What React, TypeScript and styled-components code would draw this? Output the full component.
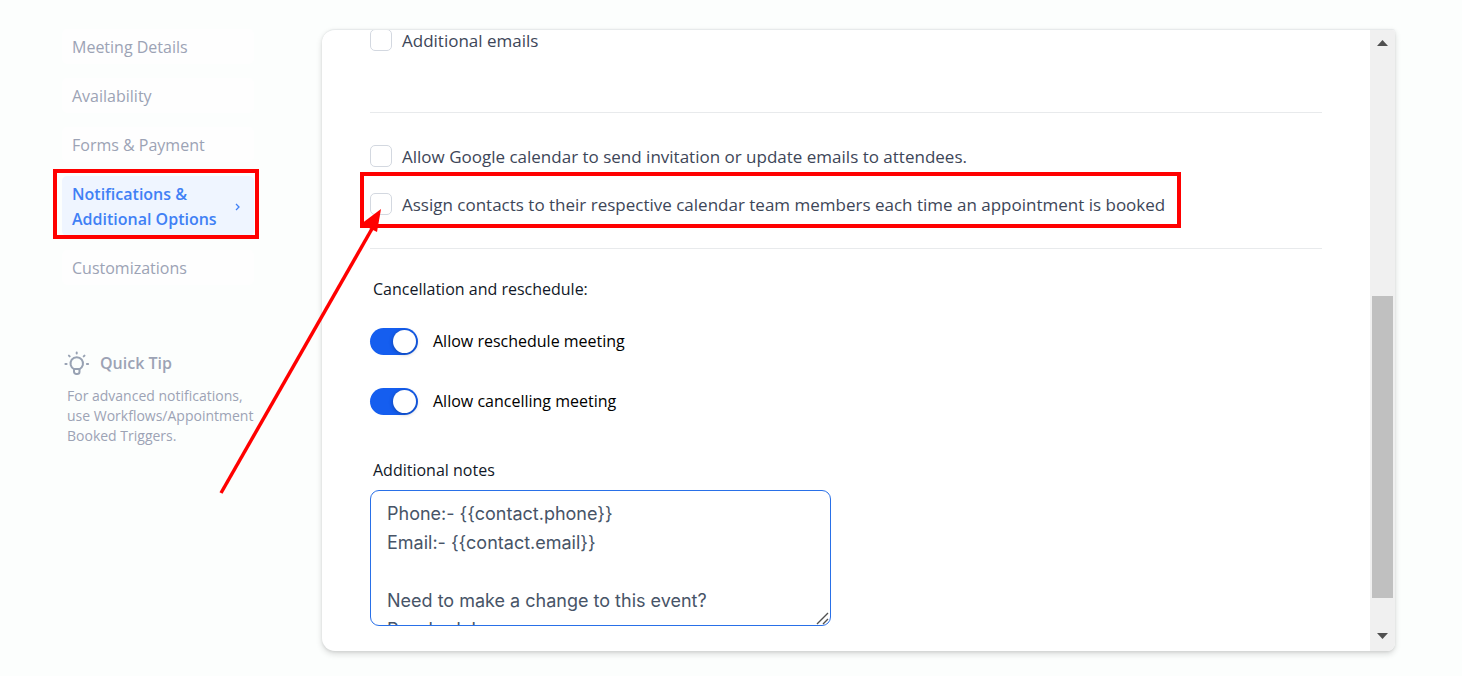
import React from "react";
import styled, { createGlobalStyle } from "styled-components";

const GlobalStyle = createGlobalStyle`
  *, *::before, *::after { box-sizing: border-box; }
  body {
    margin: 0;
    background: #fcfefd;
    font-family: "Open Sans", "Noto Sans", sans-serif;
    color: #111827;
  }
`;

const Page = styled.main`
  position: relative;
  display: flex;
  align-items: flex-start;
  gap: 68px;
  padding: 29px 67px 25px 62px;
`;

const Sidebar = styled.aside`
  flex: 0 0 192px;
`;

const NavList = styled.nav`
  display: flex;
  flex-direction: column;
  gap: 14px;
`;

const NavLink = styled.a<{ $active?: boolean }>`
  position: relative;
  display: flex;
  align-items: center;
  justify-content: space-between;
  padding: 6px 14px 4px 10px;
  border-radius: 5px;
  font-size: 16px;
  line-height: 25px;
  white-space: nowrap;
  text-decoration: none;
  font-weight: ${(p) => (p.$active ? 600 : 400)};
  color: ${(p) => (p.$active ? "#4080f5" : "#9ca3b5")};
  background: ${(p) => (p.$active ? "#eff5ff" : "#fefefe")};
`;

const Highlight = styled.span<{ $inset: string }>`
  position: absolute;
  inset: ${(p) => p.$inset};
  border: 4px solid #ff0000;
  pointer-events: none;
`;

const Tip = styled.section`
  margin-top: 65px;
  color: #9ca3b5;
`;

const TipTitle = styled.h2`
  display: flex;
  align-items: center;
  gap: 10px;
  margin: 0;
  padding-left: 2px;
  font-size: 16px;
  line-height: 26px;
  font-weight: 600;
`;

const TipText = styled.p`
  margin: 10px 0 0;
  padding-left: 5px;
  font-size: 14px;
  line-height: 20px;
  white-space: nowrap;
`;

const Panel = styled.section`
  display: flex;
  flex: 1;
  min-width: 0;
  overflow: hidden;
  border-top: 1px solid #e7eaeb;
  border-radius: 13px 3px 8px 13px;
  background: #ffffff;
  box-shadow: 0 3px 6px rgba(0, 0, 0, 0.14), 0 1px 3px rgba(0, 0, 0, 0.08);
`;

const Content = styled.form`
  flex: 1;
  min-width: 0;
  margin-top: -2px;
  padding: 0 48px 25px;
`;

const Group = styled.div<{ $space: string }>`
  display: flex;
  flex-direction: column;
  gap: 24px;
  padding: ${(p) => p.$space};
  border-bottom: 1px solid #e8eaec;
`;

const CheckLabel = styled.label`
  position: relative;
  display: flex;
  align-items: center;
  align-self: flex-start;
  gap: 10px;
  font-size: 17px;
  line-height: 22px;
  color: #3d4658;
`;

const CheckText = styled.span`
  padding-top: 2px;
`;

const Checkbox = styled.input`
  appearance: none;
  flex: none;
  width: 22px;
  height: 22px;
  margin: 0;
  border: 1px solid #d3d8e0;
  border-radius: 5px;
  background: #ffffff;
`;

const GroupTitle = styled.h2`
  margin: 28px 0 26px;
  padding-left: 3px;
  font-size: 16px;
  line-height: 25px;
  font-weight: 400;
`;

const SwitchList = styled.div`
  display: flex;
  flex-direction: column;
  gap: 33px;
`;

const SwitchLabel = styled.label`
  display: flex;
  align-items: center;
  align-self: flex-start;
  gap: 15px;
  font-size: 16px;
  line-height: 27px;
  color: #000000;
`;

const Switch = styled.input`
  appearance: none;
  display: flex;
  align-items: center;
  width: 48px;
  height: 27px;
  margin: 0;
  padding: 2px;
  border-radius: 14px;
  background: #155eef;

  &::before {
    content: "";
    width: 23px;
    height: 23px;
    border-radius: 50%;
    background: #ffffff;
    box-shadow: 0 1px 4px rgba(0, 0, 0, 0.3);
  }

  &:checked {
    justify-content: flex-end;
  }
`;

const NotesLabel = styled.label`
  display: block;
  margin-top: 42px;
  padding-left: 3px;
  font-size: 16px;
  line-height: 26px;
`;

const NotesField = styled.div`
  position: relative;
  width: 461px;
  max-width: 100%;
  margin-top: 7px;
`;

const Notes = styled.textarea`
  display: block;
  width: 100%;
  height: 136px;
  padding: 8px 16px;
  overflow: hidden;
  resize: none;
  border: 1px solid #2970e8;
  border-radius: 9px;
  outline: none;
  background: #ffffff;
  font-family: Inter, sans-serif;
  font-size: 18px;
  line-height: 29px;
  color: #475467;
`;

const Grip = styled.svg`
  position: absolute;
  right: 1px;
  bottom: 1px;
`;

const ScrollTrack = styled.div`
  display: flex;
  flex-direction: column;
  flex: 0 0 25px;
  padding: 0 2px 2px;
  background: #f0f0f0;
`;

const ScrollButton = styled.button`
  display: flex;
  align-items: center;
  justify-content: center;
  height: 26px;
  padding: 0;
  border: 0;
  background: transparent;
`;

const ThumbSpace = styled.div`
  display: flex;
  flex: 1;
  flex-direction: column;
`;

const ThumbGap = styled.div<{ $grow: number }>`
  flex: ${(p) => p.$grow} 0 0;
`;

const Thumb = styled.div`
  flex: 302 0 0;
  background: #c0c0c0;
`;

const Arrow = styled.svg`
  position: absolute;
  left: 218px;
  top: 206px;
  pointer-events: none;
`;

const Chevron = () => (
  <svg width="5" height="8" viewBox="0 0 5 8" aria-hidden="true">
    <path d="M1 1l3 3-3 3" fill="none" stroke="#4080f5" strokeWidth="1.3" />
  </svg>
);

const Bulb = () => (
  <svg width="26" height="26" viewBox="0 0 26 26" fill="none" stroke="#98a2b3" strokeWidth="2" strokeLinecap="round" strokeLinejoin="round" aria-hidden="true">
    <path d="M10.300 19.300a6.300 6.300 0 1 1 4.900 0" />
    <path d="M10 19h5.500v2.700a2.300 2.300 0 0 1-2.300 2.300h-.9a2.300 2.300 0 0 1-2.300-2.300z" />
    <path d="M12.700 2.400v1M4.900 5.600l.8.800M20.500 5.600l-.8.800M1.400 14h1.200M22.900 14h1.200" />
  </svg>
);

const notes = `Phone:- {{contact.phone}}
Email:- {{contact.email}}

Need to make a change to this event?
Reschedule:-`;

export default function App() {
  return (
    <>
      <GlobalStyle />
      <Page>
        <Sidebar>
          <NavList aria-label="Calendar settings">
            <NavLink href="#details">Meeting Details</NavLink>
            <NavLink href="#availability">Availability</NavLink>
            <NavLink href="#forms">Forms &amp; Payment</NavLink>
            <NavLink href="#notifications" $active aria-current="page">
              <span>
                Notifications &amp;
                <br />
                Additional Options
              </span>
              <Chevron />
              <Highlight $inset="-7px -5px -3px -9px" />
            </NavLink>
            <NavLink href="#customizations">Customizations</NavLink>
          </NavList>
          <Tip>
            <TipTitle>
              <Bulb />
              Quick Tip
            </TipTitle>
            <TipText>
              For advanced notifications,
              <br />
              use Workflows/Appointment
              <br />
              Booked Triggers.
            </TipText>
          </Tip>
        </Sidebar>

        <Panel>
          <Content>
            <Group $space="0 0 60px">
              <CheckLabel>
                <Checkbox type="checkbox" />
                <CheckText>Additional emails</CheckText>
              </CheckLabel>
            </Group>
            <Group $space="31px 0 32px">
              <CheckLabel>
                <Checkbox type="checkbox" />
                <CheckText>
                  Allow Google calendar to send invitation or update emails to attendees.
                </CheckText>
              </CheckLabel>
              <CheckLabel>
                <Checkbox type="checkbox" />
                <CheckText>
                  Assign contacts to their respective calendar team members each time an appointment is booked
                </CheckText>
                <Highlight $inset="-20px -16px -12px -10px" />
              </CheckLabel>
            </Group>

            <GroupTitle>Cancellation and reschedule:</GroupTitle>
            <SwitchList>
              <SwitchLabel>
                <Switch type="checkbox" role="switch" defaultChecked />
                Allow reschedule meeting
              </SwitchLabel>
              <SwitchLabel>
                <Switch type="checkbox" role="switch" defaultChecked />
                Allow cancelling meeting
              </SwitchLabel>
            </SwitchList>

            <NotesLabel htmlFor="notes">Additional notes</NotesLabel>
            <NotesField>
              <Notes id="notes" defaultValue={notes} />
              <Grip width="14" height="14" viewBox="0 0 14 14" aria-hidden="true">
                <path d="M1 13L12 2M7 13l5-5" stroke="#505050" strokeWidth="1.4" />
              </Grip>
            </NotesField>
          </Content>

          <ScrollTrack>
            <ScrollButton type="button" aria-label="Scroll up">
              <svg width="11" height="6" viewBox="0 0 11 6">
                <path d="M0 6L5.500 0 11 6z" fill="#505050" />
              </svg>
            </ScrollButton>
            <ThumbSpace>
              <ThumbGap $grow={240} />
              <Thumb />
              <ThumbGap $grow={25} />
            </ThumbSpace>
            <ScrollButton type="button" aria-label="Scroll down">
              <svg width="11" height="6" viewBox="0 0 11 6">
                <path d="M0 0h11L5.500 6z" fill="#505050" />
              </svg>
            </ScrollButton>
          </ScrollTrack>
        </Panel>

        <Arrow width="166" height="290" viewBox="0 0 166 290" aria-hidden="true">
          <path d="M3 287L155 21" stroke="#ff0000" strokeWidth="3.500" />
          <path d="M163 3L143 18 159 26z" fill="#ff0000" />
        </Arrow>
      </Page>
    </>
  );
}
